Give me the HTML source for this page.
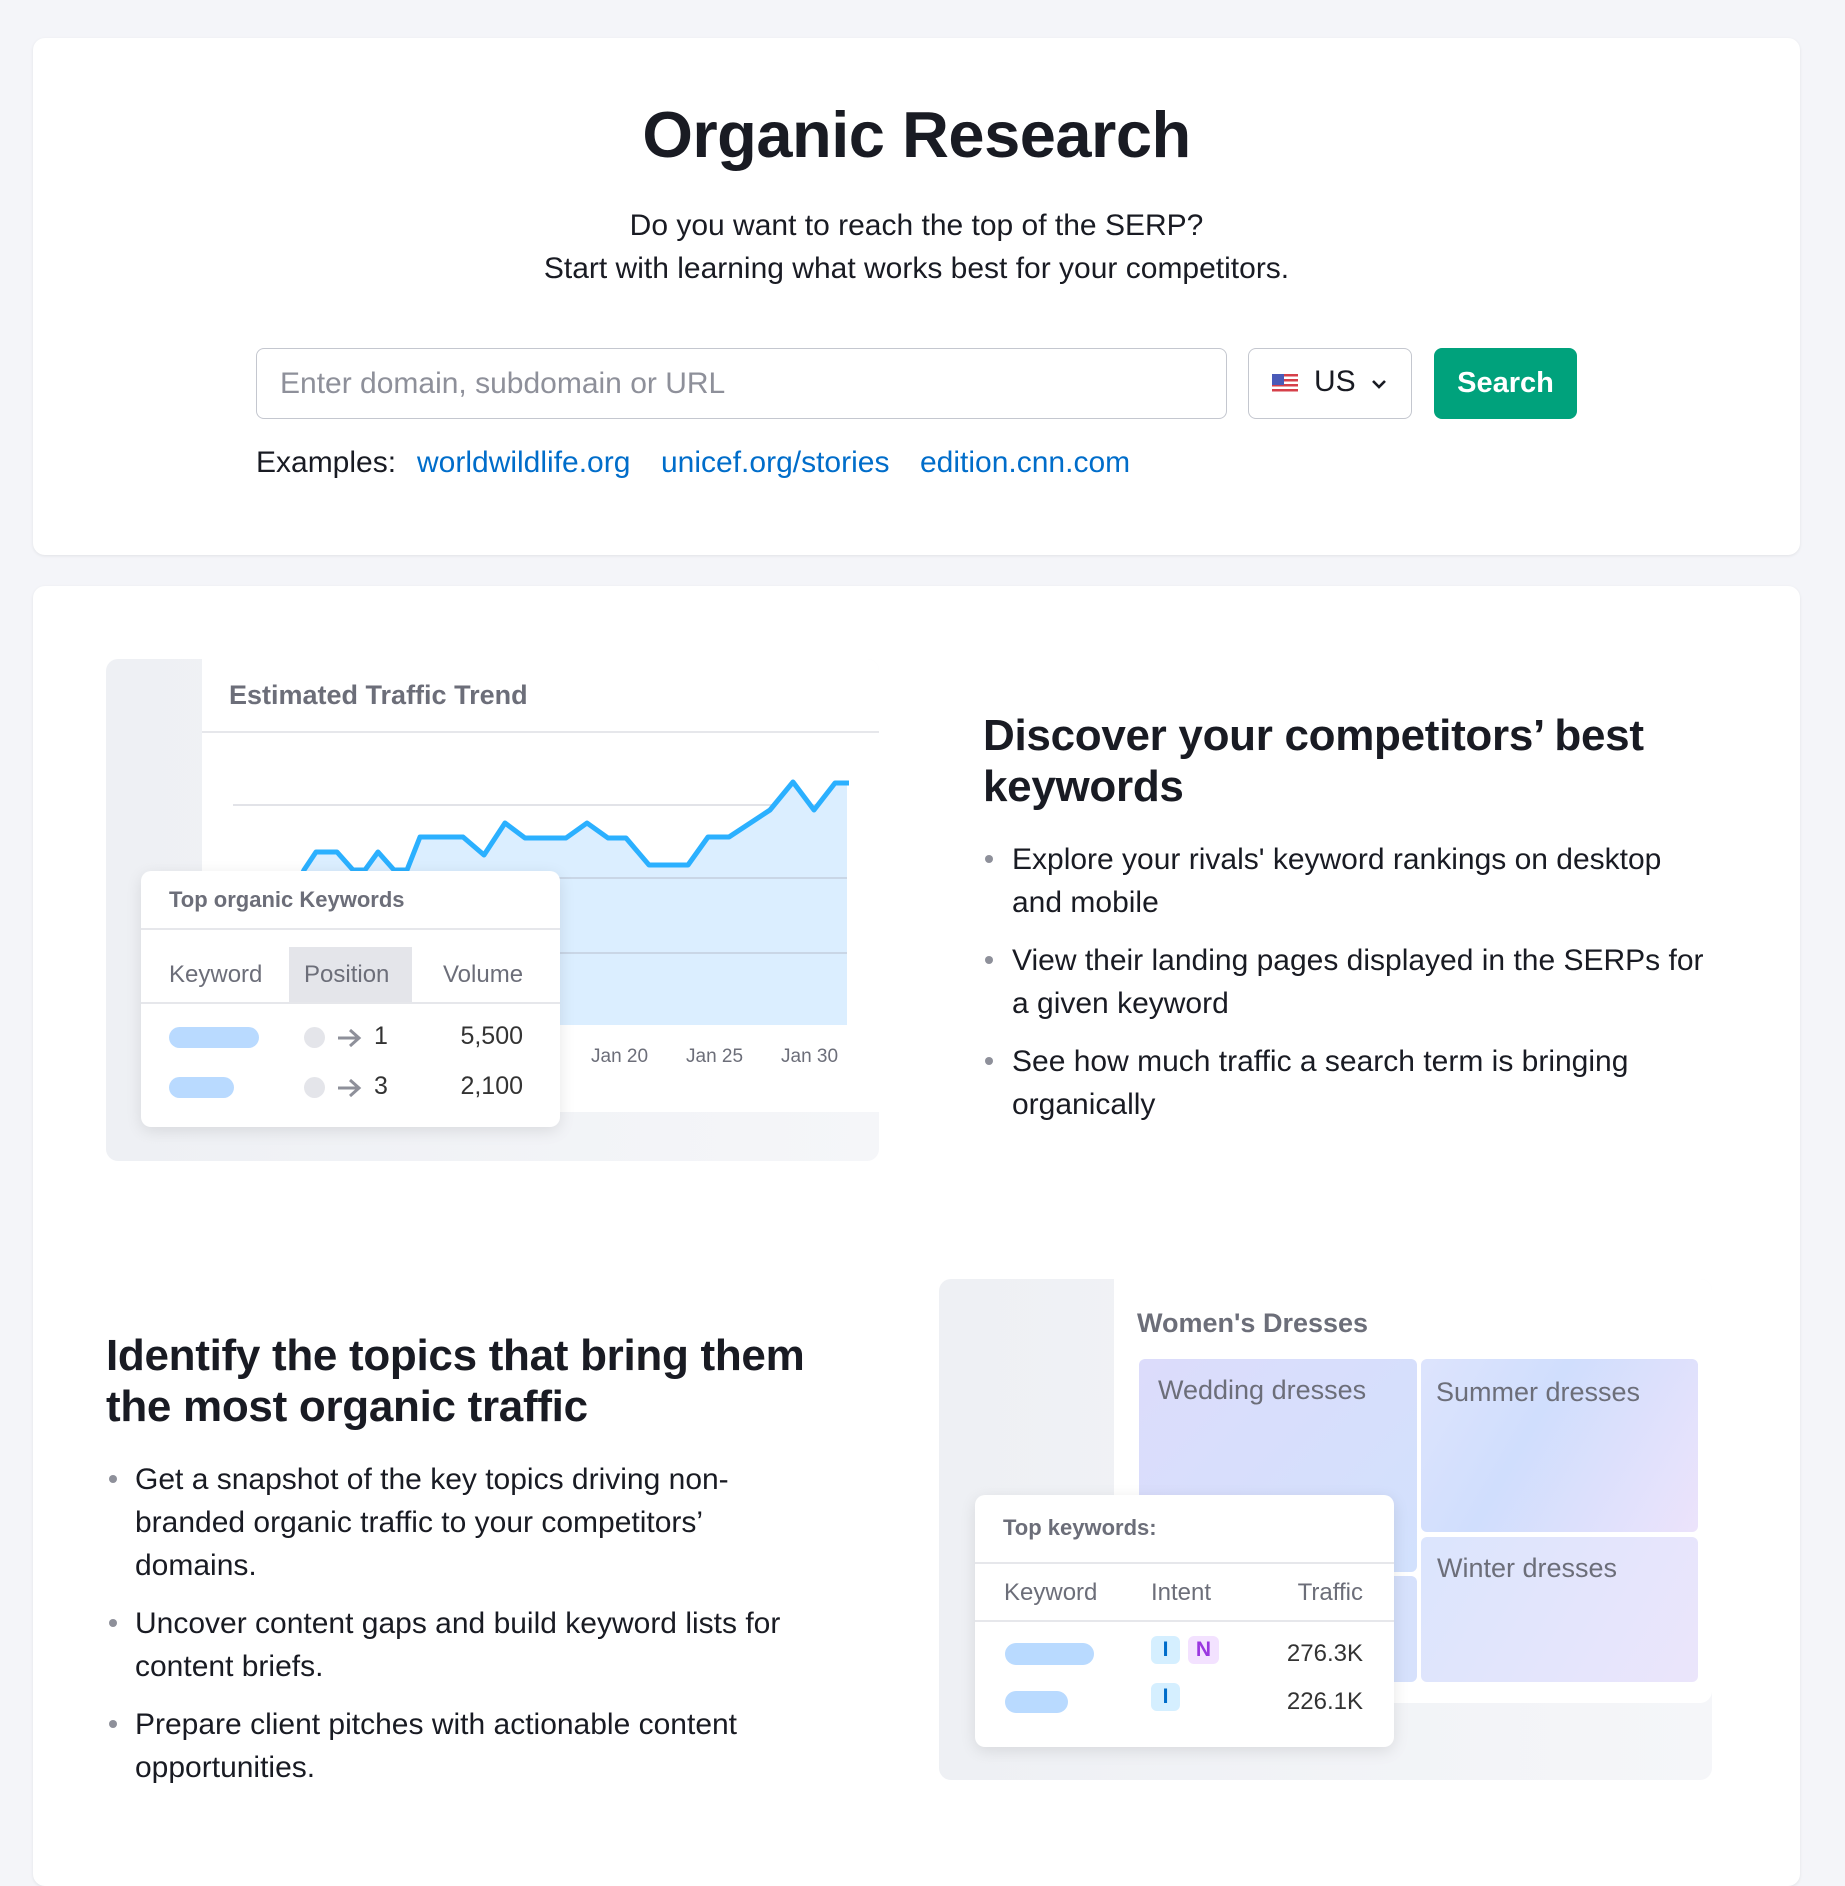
<!DOCTYPE html>
<html><head><meta charset="utf-8"><style>
*{margin:0;padding:0;box-sizing:border-box}
body{width:1845px;height:1842px;background:#f4f5f9;font-family:"Liberation Sans",sans-serif;color:#191b23;position:relative;overflow:hidden}
.abs{position:absolute}
.card{position:absolute;background:#fff;border-radius:12px;box-shadow:0 1px 3px rgba(0,0,0,.08)}
.t{position:absolute;white-space:nowrap}
.h2{font-weight:700;font-size:44px;line-height:51px;letter-spacing:-0.3px;color:#191b23}
.bl{font-size:30px;line-height:43px;color:#191b23}
.dot{position:absolute;width:8px;height:8px;border-radius:50%;background:#8e909a}
.pill{position:absolute;height:21px;border-radius:11px;background:#b9daff}
.g{color:#6c6e79}
</style></head><body>

<div class="card" style="left:33px;top:38px;width:1767px;height:517px"></div>
<div class="t" style="left:0;width:1833px;text-align:center;top:97px;font-size:65px;font-weight:700;letter-spacing:-0.5px">Organic Research</div>
<div class="t" style="left:0;width:1833px;text-align:center;top:204px;font-size:30px;line-height:43px">Do you want to reach the top of the SERP?<br>Start with learning what works best for your competitors.</div>

<div class="abs" style="left:256px;top:348px;width:971px;height:71px;border:1px solid #c4c7cf;border-radius:8px"></div>
<div class="t" style="left:280px;top:367px;font-size:30px;color:#8e909a">Enter domain, subdomain or URL</div>
<div class="abs" style="left:1248px;top:348px;width:164px;height:71px;border:1px solid #c4c7cf;border-radius:8px"></div>
<svg class="abs" style="left:1272px;top:374px" width="26" height="20" viewBox="0 0 26 20"><rect width="26" height="20" fill="#fff"/><g fill="#d6404a"><rect y="0" width="26" height="2.5"/><rect y="5" width="26" height="2.5"/><rect y="10" width="26" height="2.5"/><rect y="15" width="26" height="2.5"/></g><rect width="12" height="11" fill="#4a5ab8"/></svg>
<div class="t" style="left:1314px;top:365px;font-size:30px">US</div>
<svg class="abs" style="left:1370px;top:378px" width="18" height="12" viewBox="0 0 18 12"><path d="M3 3 L9 9 L15 3" fill="none" stroke="#191b23" stroke-width="2.6"/></svg>
<div class="abs" style="left:1434px;top:348px;width:143px;height:71px;background:#00a27c;border-radius:8px;color:#fff;font-weight:700;font-size:29px;text-align:center;line-height:71px">Search</div>

<div class="t" style="left:256px;top:446px;font-size:30px">Examples:</div>
<div class="t" style="left:417px;top:446px;font-size:30px;color:#006dca">worldwildlife.org</div>
<div class="t" style="left:661px;top:446px;font-size:30px;color:#006dca">unicef.org/stories</div>
<div class="t" style="left:920px;top:446px;font-size:30px;color:#006dca">edition.cnn.com</div>

<div class="card" style="left:33px;top:586px;width:1767px;height:1300px"></div>

<!-- illustration 1 -->
<div class="abs" style="left:106px;top:659px;width:773px;height:502px;background:linear-gradient(90deg,#eef0f4,#f5f6f9);border-radius:12px"></div>
<div class="abs" style="left:202px;top:659px;width:677px;height:453px;background:#fff;border-radius:0 12px 0 0"></div>
<div class="t g" style="left:229px;top:680px;font-size:27px;font-weight:700">Estimated Traffic Trend</div>
<div class="abs" style="left:202px;top:731px;width:677px;height:2px;background:#e6e7eb"></div>
<svg class="abs" style="left:0;top:0" width="900" height="1100">
<line x1="233" y1="805" x2="847" y2="805" stroke="#e2e3e8" stroke-width="2"/>
<path d="M290 900 L304 870 L316 852 L337 852 L353 870 L365 870 L378 852 L394 870 L407 870 L420 837 L463 837 L484 855 L505 823 L525 838 L566 838 L587 823 L608 838 L626 838 L649 865 L688 865 L708 837 L729 837 L770 810 L793 782 L814 810 L835 783 L847 783 L847 1025 L290 1025 Z" fill="#dbeeff"/>
<line x1="233" y1="878" x2="847" y2="878" stroke="#c9d6e6" stroke-width="2"/>
<line x1="233" y1="953" x2="847" y2="953" stroke="#c9d6e6" stroke-width="2"/>
<path d="M290 900 L304 870 L316 852 L337 852 L353 870 L365 870 L378 852 L394 870 L407 870 L420 837 L463 837 L484 855 L505 823 L525 838 L566 838 L587 823 L608 838 L626 838 L649 865 L688 865 L708 837 L729 837 L770 810 L793 782 L814 810 L835 783 L849 783" fill="none" stroke="#2bb0ff" stroke-width="5" stroke-linejoin="round"/>
</svg>
<div class="t g" style="left:591px;top:1046px;font-size:19px">Jan 20</div>
<div class="t g" style="left:686px;top:1046px;font-size:19px">Jan 25</div>
<div class="t g" style="left:781px;top:1046px;font-size:19px">Jan 30</div>

<div class="abs" style="left:141px;top:871px;width:419px;height:256px;background:#fff;border-radius:10px;box-shadow:0 4px 16px rgba(0,0,0,.1)"></div>
<div class="t g" style="left:169px;top:887px;font-size:22px;font-weight:700">Top organic Keywords</div>
<div class="abs" style="left:141px;top:928px;width:419px;height:2px;background:#e6e7eb"></div>
<div class="abs" style="left:289px;top:947px;width:123px;height:56px;background:#e4e5ea"></div>
<div class="t g" style="left:169px;top:961px;font-size:24px">Keyword</div>
<div class="t g" style="left:304px;top:961px;font-size:24px">Position</div>
<div class="t g" style="left:443px;top:961px;font-size:24px">Volume</div>
<div class="abs" style="left:141px;top:1002px;width:419px;height:2px;background:#e6e7eb"></div>
<div class="pill" style="left:169px;top:1027px;width:90px"></div>
<div class="pill" style="left:169px;top:1077px;width:65px"></div>
<div class="abs" style="left:304px;top:1027px;width:21px;height:21px;border-radius:50%;background:#e4e5ea"></div>
<div class="abs" style="left:304px;top:1077px;width:21px;height:21px;border-radius:50%;background:#e4e5ea"></div>
<svg class="abs" style="left:336px;top:1027px" width="26" height="22" viewBox="0 0 26 22"><path d="M2 11 H23 M14 3 L23 11 L14 19" fill="none" stroke="#8e909a" stroke-width="3"/></svg>
<svg class="abs" style="left:336px;top:1077px" width="26" height="22" viewBox="0 0 26 22"><path d="M2 11 H23 M14 3 L23 11 L14 19" fill="none" stroke="#8e909a" stroke-width="3"/></svg>
<div class="t" style="left:374px;top:1022px;font-size:25px;color:#333">1</div>
<div class="t" style="left:374px;top:1072px;font-size:25px;color:#333">3</div>
<div class="t" style="left:425px;width:98px;text-align:right;top:1022px;font-size:25px;color:#333">5,500</div>
<div class="t" style="left:425px;width:98px;text-align:right;top:1072px;font-size:25px;color:#333">2,100</div>

<!-- text 1 -->
<div class="t h2" style="left:983px;top:710px">Discover your competitors’ best<br>keywords</div>
<div class="dot" style="left:985px;top:855px"></div>
<div class="dot" style="left:985px;top:956px"></div>
<div class="dot" style="left:985px;top:1057px"></div>
<div class="t bl" style="left:1012px;top:838px">Explore your rivals' keyword rankings on desktop<br>and mobile</div>
<div class="t bl" style="left:1012px;top:939px">View their landing pages displayed in the SERPs for<br>a given keyword</div>
<div class="t bl" style="left:1012px;top:1040px">See how much traffic a search term is bringing<br>organically</div>

<!-- text 2 -->
<div class="t h2" style="left:106px;top:1330px">Identify the topics that bring them<br>the most organic traffic</div>
<div class="dot" style="left:109px;top:1475px"></div>
<div class="dot" style="left:109px;top:1619px"></div>
<div class="dot" style="left:109px;top:1720px"></div>
<div class="t bl" style="left:135px;top:1458px">Get a snapshot of the key topics driving non-<br>branded organic traffic to your competitors’<br>domains.</div>
<div class="t bl" style="left:135px;top:1602px">Uncover content gaps and build keyword lists for<br>content briefs.</div>
<div class="t bl" style="left:135px;top:1703px">Prepare client pitches with actionable content<br>opportunities.</div>

<!-- illustration 2 -->
<div class="abs" style="left:939px;top:1279px;width:773px;height:501px;background:linear-gradient(90deg,#eef0f4,#f5f6f9);border-radius:12px"></div>
<div class="abs" style="left:1114px;top:1279px;width:598px;height:424px;background:#fff;border-radius:0 12px 12px 0"></div>
<div class="t g" style="left:1137px;top:1308px;font-size:27px;font-weight:700">Women's Dresses</div>
<div class="abs" style="left:1139px;top:1359px;width:278px;height:213px;border-radius:6px;background:linear-gradient(135deg,#dcdcfb,#d2e1fd)"></div>
<div class="abs" style="left:1139px;top:1576px;width:278px;height:106px;border-radius:6px;background:#d6e1fc"></div>
<div class="abs" style="left:1421px;top:1359px;width:277px;height:173px;border-radius:6px;background:linear-gradient(120deg,#dde4fd,#d0defd 40%,#ece3fb)"></div>
<div class="abs" style="left:1421px;top:1537px;width:277px;height:145px;border-radius:6px;background:linear-gradient(120deg,#dbe5fd,#ebe5fb)"></div>
<div class="t g" style="left:1158px;top:1375px;font-size:27px">Wedding dresses</div>
<div class="t g" style="left:1436px;top:1377px;font-size:27px">Summer dresses</div>
<div class="t g" style="left:1437px;top:1553px;font-size:27px">Winter dresses</div>

<div class="abs" style="left:975px;top:1495px;width:419px;height:252px;background:#fff;border-radius:10px;box-shadow:0 4px 16px rgba(0,0,0,.1)"></div>
<div class="t g" style="left:1003px;top:1515px;font-size:22px;font-weight:700">Top keywords:</div>
<div class="abs" style="left:975px;top:1562px;width:419px;height:2px;background:#e6e7eb"></div>
<div class="t g" style="left:1004px;top:1579px;font-size:24px">Keyword</div>
<div class="t g" style="left:1151px;top:1579px;font-size:24px">Intent</div>
<div class="t g" style="left:1250px;width:113px;text-align:right;top:1579px;font-size:24px">Traffic</div>
<div class="abs" style="left:975px;top:1620px;width:419px;height:2px;background:#e6e7eb"></div>
<div class="pill" style="left:1005px;top:1643px;width:89px;height:22px"></div>
<div class="pill" style="left:1005px;top:1691px;width:63px;height:22px"></div>
<div class="abs" style="left:1151px;top:1636px;width:29px;height:28px;border-radius:6px;background:#d5efff;color:#006dca;font-weight:700;font-size:21px;text-align:center;line-height:28px">I</div>
<div class="abs" style="left:1188px;top:1636px;width:31px;height:28px;border-radius:6px;background:#f3e2ff;color:#9a37e0;font-weight:700;font-size:21px;text-align:center;line-height:28px">N</div>
<div class="abs" style="left:1151px;top:1683px;width:29px;height:28px;border-radius:6px;background:#d5efff;color:#006dca;font-weight:700;font-size:21px;text-align:center;line-height:28px">I</div>
<div class="t" style="left:1250px;width:113px;text-align:right;top:1640px;font-size:24px;color:#333">276.3K</div>
<div class="t" style="left:1250px;width:113px;text-align:right;top:1688px;font-size:24px;color:#333">226.1K</div>
</body></html>
